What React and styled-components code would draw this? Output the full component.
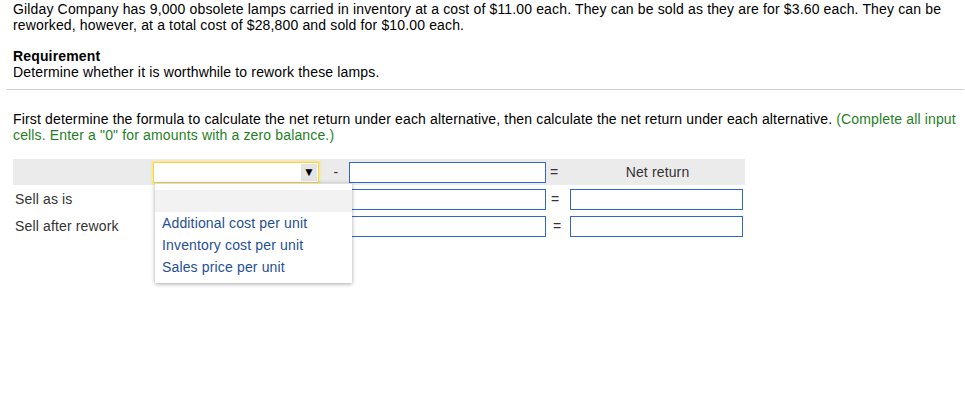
import React from "react";
import styled, { createGlobalStyle } from "styled-components";

const Global = createGlobalStyle`
  html, body { margin: 0; padding: 0; background: #fff; }
  body { font-family: "Liberation Sans", Arial, sans-serif; font-size: 14px; letter-spacing: 0.15px; color: #000; }
`;

const Page = styled.div`
  padding: 0 0 0 13px;
  width: 965px;
  min-height: 408px;
  box-sizing: border-box;
`;

const Para = styled.p`
  margin: 0;
  line-height: 16px;
  padding-top: ${(p) => p.$top || 0}px;
`;

const Bold = styled.div`
  font-weight: bold;
  line-height: 16px;
`;

const Rule = styled.hr`
  border: none;
  border-top: 1px solid #cdd0d6;
  margin: 9px 0 0 -7px;
  width: 958px;
  height: 0;
`;

const Green = styled.span`
  color: #1f7f1f;
`;

const TableWrap = styled.div`
  position: relative;
  margin-top: 16px;
  width: 732px;
`;

const Table = styled.div`
  display: grid;
  grid-template-columns: 140px 170px 26px 197px 24px 175px;
  grid-auto-rows: 26px;
  row-gap: 1px;
`;

const Cell = styled.div`
  display: flex;
  align-items: center;
  justify-content: ${(p) => p.$justify || "flex-start"};
  background: ${(p) => (p.$head ? "#ebebeb" : "transparent")};
  color: #333;
  padding-left: ${(p) => p.$pl || 0}px;
`;

const SelectBox = styled.div`
  width: 166px;
  height: 21px;
  box-sizing: border-box;
  background: #fff;
  border: 1px solid #f5d745;
  box-shadow: 0 0 2px 1px #fbe57a;
  display: flex;
  justify-content: flex-end;
  padding: 1px 1px 1px 0;
`;

const Arrow = styled.div`
  width: 16px;
  height: 100%;
  background: #e4e4e4;
  display: flex;
  align-items: center;
  justify-content: center;
  font-size: 12px;
  color: #000;
`;

const Input = styled.div`
  width: ${(p) => p.$w || 197}px;
  height: 21px;
  box-sizing: border-box;
  border: 1px solid #2f66d0;
  background: #fff;
`;

const Dropdown = styled.div`
  position: absolute;
  left: 142px;
  top: 24px;
  width: 197px;
  box-sizing: border-box;
  padding: 6px 0 5px;
  background: #fff;
  box-shadow: 0 1px 4px rgba(0, 0, 0, 0.35);
  border-top: 1px solid #ddd;
  z-index: 5;
`;

const Option = styled.div`
  height: 22px;
  line-height: 22px;
  padding-left: 7px;
  color: #1f4f96;
  background: ${(p) => (p.$active ? "#f2f2f2" : "#fff")};
`;

const Sign = styled.span`
  color: #333;
`;

export default function App() {
  return (
    <Page>
      <Global />
      <Para $top={1}>
        Gilday Company has 9,000 obsolete lamps carried in inventory at a cost of $11.00 each. They can be sold as they are for $3.60 each. They can be
        reworked, however, at a total cost of $28,800 and sold for $10.00 each.
      </Para>
      <Para $top={15}>
        <Bold>Requirement</Bold>
        Determine whether it is worthwhile to rework these lamps.
      </Para>
      <Rule />
      <Para $top={21}>
        First determine the formula to calculate the net return under each alternative, then calculate the net return under each alternative.{" "}
        <Green>(Complete all input cells. Enter a "0" for amounts with a zero balance.)</Green>
      </Para>
      <TableWrap>
        <Table>
          <Cell $head />
          <Cell $head>
            <SelectBox>
              <Arrow>▼</Arrow>
            </SelectBox>
          </Cell>
          <Cell $head $justify="center"><Sign>-</Sign></Cell>
          <Cell $head><Input /></Cell>
          <Cell $head $pl={4}><Sign>=</Sign></Cell>
          <Cell $head $justify="center">Net return</Cell>

          <Cell $pl={2}>Sell as is</Cell>
          <Cell />
          <Cell />
          <Cell><Input /></Cell>
          <Cell $pl={5}><Sign>=</Sign></Cell>
          <Cell><Input $w={173} /></Cell>

          <Cell $pl={2}>Sell after rework</Cell>
          <Cell />
          <Cell />
          <Cell><Input /></Cell>
          <Cell $pl={7}><Sign>=</Sign></Cell>
          <Cell><Input $w={173} /></Cell>
        </Table>
        <Dropdown>
          <Option $active>&nbsp;</Option>
          <Option>Additional cost per unit</Option>
          <Option>Inventory cost per unit</Option>
          <Option>Sales price per unit</Option>
        </Dropdown>
      </TableWrap>
    </Page>
  );
}
